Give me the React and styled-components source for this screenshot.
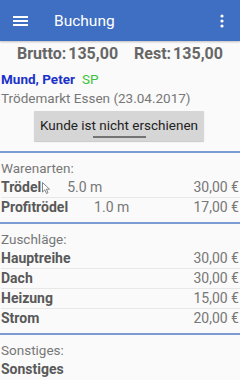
import React from 'react';
import styled, { createGlobalStyle } from 'styled-components';

const Global = createGlobalStyle`
  html, body {
    margin: 0;
    padding: 0;
    background: #fafafa;
  }
  body {
    font-family: Roboto, "Liberation Sans", sans-serif;
    width: 240px;
    height: 380px;
    overflow: hidden;
  }
`

const Toolbar = styled.div`
  display: flex;
  align-items: center;
  height: 41px;
  background: #3f6fc3;
  color: white;
  padding: 0 16px 0 13px;
  box-shadow: 0 1px 2px rgba(0,0,0,0.25);
`

const Title = styled.div`
  flex: 1;
  font-size: 15.5px;
  margin-left: 26px;
`

const Totals = styled.div`
  display: flex;
  justify-content: center;
  gap: 16px;
  margin-top: 3px;
  line-height: 20px;
  font-size: 16px;
  font-weight: bold;
  color: #666;

  span {
    margin-left: 2px;
  }
`

const Kunde = styled.div`
  margin-top: 6px;
  padding-left: 1px;
  font-size: 13.5px;
`

const Name = styled.div`
  line-height: 19px;
  font-weight: bold;
  color: #1b32c9;

  span {
    font-weight: normal;
    color: #3cc43c;
    margin-left: 7px;
  }
`

const Markt = styled.div`
  line-height: 19px;
  color: #777;
`

const ButtonWrap = styled.div`
  display: flex;
  justify-content: center;
  padding: 3px 2px 10px 0;
`

const Knopf = styled.div`
  position: relative;
  width: 170px;
  height: 30px;
  background: #d6d6d6;
  box-shadow: 0 1px 1px rgba(0,0,0,0.2);
  border-radius: 1px;
  font-size: 13.5px;
  color: #222;
  display: flex;
  align-items: center;
  justify-content: center;
  padding-bottom: 2px;
  box-sizing: border-box;

  &::after {
    content: '';
    position: absolute;
    left: 59px;
    width: 53px;
    bottom: 3px;
    height: 2px;
    background: #747474;
  }
`

const Section = styled.div`
  border-top: 2px solid #7b9bd3;
  padding: 5px 0 5px 1px;
  font-size: 14px;
`

const SectionTitle = styled.div`
  line-height: 20px;
  font-size: 13.5px;
  color: #777;
`

const Row = styled.div`
  display: flex;
  line-height: 19px;
  & + & {
    border-top: 1px solid #e8e8e8;
  }
`

const Label = styled.div`
  position: relative;
  font-weight: bold;
  color: #595959;
  margin-right: 26px;
`

const Menge = styled.div`
  color: #777;
  flex: 1;
`

const Preis = styled.div`
  color: #777;
  margin-left: auto;
  padding-right: 1px;
`

const Cursor = styled.svg`
  position: absolute;
  left: 41px;
  top: 4px;
`

const Hamburger = () => (
  <svg width="15" height="12" viewBox="0 0 15 12">
    <rect x="0" y="1" width="15" height="2" fill="white" />
    <rect x="0" y="5" width="15" height="2" fill="white" />
    <rect x="0" y="9" width="15" height="2" fill="white" />
  </svg>
)

const Kebab = () => (
  <svg width="4" height="14" viewBox="0 0 4 14">
    <circle cx="2" cy="2" r="1.6" fill="white" />
    <circle cx="2" cy="7" r="1.6" fill="white" />
    <circle cx="2" cy="12" r="1.6" fill="white" />
  </svg>
)

const waren = [
  { name: 'Trödel', menge: '5.0 m', preis: '30,00 €', cursor: true },
  { name: 'Profitrödel', menge: '1.0 m', preis: '17,00 €' },
]

const zuschlaege = [
  { name: 'Hauptreihe', preis: '30,00 €' },
  { name: 'Dach', preis: '30,00 €' },
  { name: 'Heizung', preis: '15,00 €' },
  { name: 'Strom', preis: '20,00 €' },
]

export default function App() {
  return (
    <>
      <Global />
      <Toolbar>
        <Hamburger />
        <Title>Buchung</Title>
        <Kebab />
      </Toolbar>

      <Totals>
        <div>Brutto:<span>135,00</span></div>
        <div>Rest:<span>135,00</span></div>
      </Totals>

      <Kunde>
        <Name>Mund, Peter<span>SP</span></Name>
        <Markt>Trödemarkt Essen (23.04.2017)</Markt>
      </Kunde>

      <ButtonWrap>
        <Knopf>Kunde ist nicht erschienen</Knopf>
      </ButtonWrap>

      <Section>
        <SectionTitle>Warenarten:</SectionTitle>
        {waren.map((w) => (
          <Row key={w.name}>
            <Label>
              {w.name}
              {w.cursor && (
                <Cursor width="8" height="12" viewBox="0 0 8 12">
                  <path d="M0.5 0.5 L0.5 10 L2.8 7.8 L4.5 11.5 L6 10.8 L4.4 7.2 L7.5 7.2 Z" fill="white" stroke="#777" strokeWidth="0.9" />
                </Cursor>
              )}
            </Label>
            <Menge>{w.menge}</Menge>
            <Preis>{w.preis}</Preis>
          </Row>
        ))}
      </Section>

      <Section>
        <SectionTitle>Zuschläge:</SectionTitle>
        {zuschlaege.map((z) => (
          <Row key={z.name}>
            <Label>{z.name}</Label>
            <Preis>{z.preis}</Preis>
          </Row>
        ))}
      </Section>

      <Section>
        <SectionTitle>Sonstiges:</SectionTitle>
        <Row>
          <Label>Sonstiges</Label>
        </Row>
      </Section>
    </>
  )
}
